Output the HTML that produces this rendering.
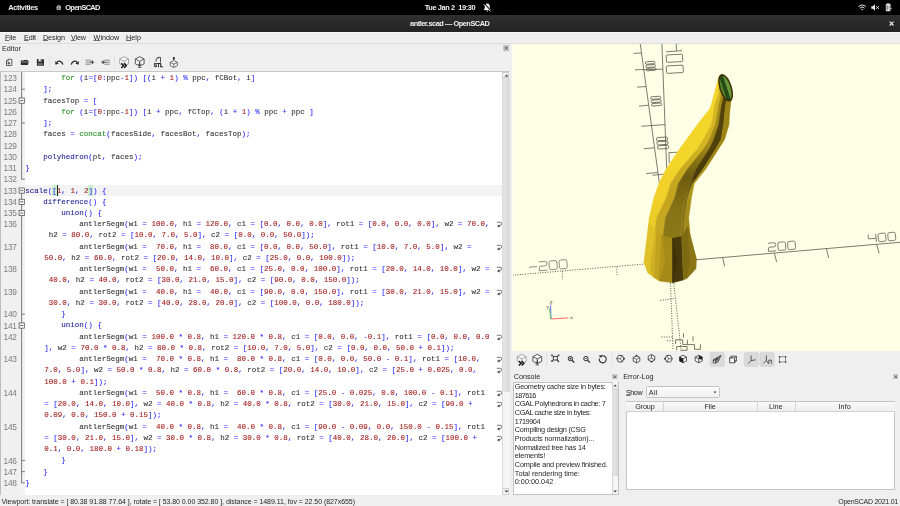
<!DOCTYPE html>
<html><head><meta charset="utf-8"><title>antler.scad — OpenSCAD</title>
<style>
html,body{margin:0;padding:0}
body{width:900px;height:506px;overflow:hidden;position:relative;background:#efefef;font-family:"Liberation Sans",sans-serif;color:#1a1a1a}
div,svg,span{box-sizing:border-box}
.abs{position:absolute}
#all{position:absolute;left:0;top:0;width:900px;height:506px;will-change:transform}
.t{position:absolute;white-space:pre;line-height:1}
#topbar{position:absolute;left:0;top:0;width:900px;height:14.5px;background:#000}
#titlebar{position:absolute;left:0;top:14.5px;width:900px;height:17px;background:linear-gradient(#303030,#282828 60%,#252525)}
#titleline{position:absolute;left:0;top:31.5px;width:900px;height:1px;background:#f8f8f8}
#editor{position:absolute;left:0;top:71px;width:509.8px;height:423.6px;background:#fff;overflow:hidden}
#edwrap{position:absolute;left:0;top:-71px;width:510px;height:506px}
.lnbg{position:absolute;left:0;top:71px;width:24.7px;height:424px;background:#f0f0f0;border-left:0.8px solid #bdbdbd}
.fmbg{position:absolute;left:20.2px;top:71px;width:4.4px;height:424px;background:#f3f3f3}
.edtop{position:absolute;left:0;top:71px;width:510px;height:0.9px;background:#c8c8c8}
.cur{position:absolute;left:24.5px;width:478px;height:11.25px;background:#f3f3f3}
.ln{position:absolute;left:0;width:16.5px;height:11.25px;line-height:11.25px;font-size:8.3px;letter-spacing:-0.32px;color:#7c7c7c;text-align:right;white-space:pre}
.row{position:absolute;height:11.25px;line-height:11.25px;font-family:"Liberation Mono",monospace;font-size:7.507px;color:#303030;white-space:pre;-webkit-text-stroke:0.08px currentColor}
.k{color:#1f8a1f} .tr{color:#1a1a90} .n{color:#a01818} .o{color:#2a2aff}
.wrap{position:absolute;left:496.0px}
</style></head>
<body><div id="all">

<div id="topbar"></div>
<div id="titlebar"></div><div id="titleline"></div>
<div class="t" style="left:8.20px;top:3.60px;font-size:7.4px;font-weight:bold;color:#f2f2f2;letter-spacing:-0.323px;">Activities</div>
<svg class="abs" style="left:55.7px;top:4.8px" width="5.6" height="5.6" viewBox="0 0 6 6"><circle cx="3" cy="3" r="2.6" fill="#cfcfcf"/><path d="M1 2.2H5M1 3.8H5M3 0.6V5.4" stroke="#555" stroke-width="0.7"/></svg>
<div class="t" style="left:65.30px;top:3.60px;font-size:7.4px;font-weight:bold;color:#f2f2f2;letter-spacing:-0.697px;">OpenSCAD</div>
<div class="t" style="left:424.70px;top:3.60px;font-size:7.4px;font-weight:bold;color:#f2f2f2;letter-spacing:-0.375px;">Tue Jan 2  19:30</div>
<svg class="abs" style="left:483.3px;top:3px" width="8.6" height="9.2" viewBox="0 0 8.6 9.2"><path d="M4.3 0.5C2.5 0.5 1.8 1.9 1.8 3.4V5.2L0.8 6.5V7H7.8V6.5L6.8 5.2V3.4C6.8 1.9 6.1 0.5 4.3 0.5ZM3.3 7.5A1 1 0 0 0 5.3 7.5Z" fill="#f4f4f4"/><path d="M1.4 0.7L8 7.9" stroke="#000" stroke-width="1.1"/><path d="M0.7 1.2L7.4 8.4" stroke="#f0f0f0" stroke-width="0.9"/></svg>
<svg class="abs" style="left:858px;top:3.8px" width="8.4" height="7" viewBox="0 0 8.4 7"><path d="M0.5 2.6A5.2 5.2 0 0 1 7.9 2.6" fill="none" stroke="#e8e8e8" stroke-width="1"/><path d="M1.9 4.1A3.3 3.3 0 0 1 6.5 4.1" fill="none" stroke="#e8e8e8" stroke-width="1"/><path d="M3.1 5.4A1.6 1.6 0 0 1 5.3 5.4L4.2 6.6Z" fill="#e8e8e8"/></svg>
<svg class="abs" style="left:870.8px;top:4.2px" width="8.6" height="7" viewBox="0 0 8.6 7"><path d="M0.3 2.3H1.8L4 0.2V6.8L1.8 4.7H0.3Z" fill="#e8e8e8"/><path d="M5.3 2.2L7.9 4.8M7.9 2.2L5.3 4.8" stroke="#e8e8e8" stroke-width="1"/></svg>
<svg class="abs" style="left:884.6px;top:3.2px" width="8" height="8.6" viewBox="0 0 8 8.6"><path d="M2 0.3H4.4V1H5.6V8.2H0.8V1H2Z" fill="#d8d8d8"/><path d="M2.2 2.6V6.8" stroke="#444" stroke-width="0.8"/><path d="M3.8 3.6L7.4 5.6L5.6 6L6 8L3.8 3.6Z" fill="#e8e8e8" stroke="#000" stroke-width="0.3"/></svg>
<div class="t" style="left:410.00px;top:19.90px;font-size:7.4px;font-weight:bold;color:#f0f0f0;letter-spacing:-0.479px;">antler.scad — OpenSCAD</div>
<svg class="abs" style="left:889px;top:21px" width="5.4" height="5.4" viewBox="0 0 5.4 5.4"><path d="M0.7 0.7L4.5 4.5M4.5 0.7L0.7 4.5" stroke="#f0f0f0" stroke-width="1.15"/></svg>


<div class="abs" style="left:0;top:43px;width:900px;height:0.8px;background:#dcdcdc"></div>
<div class="t" style="left:5.00px;top:34.20px;font-size:7.2px;color:#262626;letter-spacing:-0.134px;"><span style="text-decoration:underline;text-decoration-color:#707070;text-decoration-thickness:0.55px;text-underline-offset:0.2px">F</span>ile</div>
<div class="t" style="left:24.00px;top:34.20px;font-size:7.2px;color:#262626;letter-spacing:-0.136px;"><span style="text-decoration:underline;text-decoration-color:#707070;text-decoration-thickness:0.55px;text-underline-offset:0.2px">E</span>dit</div>
<div class="t" style="left:43.00px;top:34.20px;font-size:7.2px;color:#262626;letter-spacing:-0.082px;"><span style="text-decoration:underline;text-decoration-color:#707070;text-decoration-thickness:0.55px;text-underline-offset:0.2px">D</span>esign</div>
<div class="t" style="left:71.00px;top:34.20px;font-size:7.2px;color:#262626;letter-spacing:-0.159px;"><span style="text-decoration:underline;text-decoration-color:#707070;text-decoration-thickness:0.55px;text-underline-offset:0.2px">V</span>iew</div>
<div class="t" style="left:93.60px;top:34.20px;font-size:7.2px;color:#262626;letter-spacing:-0.002px;"><span style="text-decoration:underline;text-decoration-color:#707070;text-decoration-thickness:0.55px;text-underline-offset:0.2px">W</span>indow</div>
<div class="t" style="left:126.00px;top:34.20px;font-size:7.2px;color:#262626;letter-spacing:0.064px;"><span style="text-decoration:underline;text-decoration-color:#707070;text-decoration-thickness:0.55px;text-underline-offset:0.2px">H</span>elp</div>
<div class="t" style="left:2.00px;top:45.20px;font-size:7.2px;font-weight:normal;color:#262626;letter-spacing:0.038px;">Editor</div>
<svg class="abs" style="left:502.8px;top:45.4px" width="6.6" height="6.2" viewBox="0 0 6.6 6.2"><rect x="0.3" y="0.3" width="6" height="5.6" rx="1.2" fill="#c9c9c9" stroke="#b5b5b5" stroke-width="0.5"/><path d="M1.8 1.6L4.8 4.6M4.8 1.6L1.8 4.6" stroke="#3a3a3a" stroke-width="0.8"/></svg>

<svg class="abs" style="left:0;top:0" width="900" height="506" viewBox="0 0 900 506">
<g transform="translate(6.1 58.9) scale(1)"><path d="M2 0.4H5.7V6.6H0.4V2Z" fill="#fafafa" stroke="#2e2e2e" stroke-width="0.75"/><path d="M0.4 2H2V0.4" fill="none" stroke="#2e2e2e" stroke-width="0.6"/><path d="M1.2 4.2H4.2M2.7 2.7V5.7" stroke="#2e2e2e" stroke-width="0.9"/></g><g transform="translate(20.6 59.7) scale(1)"><path d="M0.2 0.9H2.6L3.3 0.2H7.2V1.3H8.2L7.3 5.4H0.2Z" fill="#2e2e2e"/><path d="M0.9 2.2H7.6" stroke="#efefef" stroke-width="0.5"/></g><g transform="translate(36.7 58.9) scale(1)"><path d="M0.2 0.2H6.4L7.3 1.1V6.8H0.2Z" fill="#2e2e2e"/><rect x="1.8" y="0.2" width="3.4" height="2.3" fill="#efefef"/><rect x="3.9" y="0.5" width="0.9" height="1.6" fill="#2e2e2e"/><rect x="1.3" y="4.6" width="4.9" height="1.1" fill="#9a9a9a"/></g><path d="M49.4 56.5V68" stroke="#dcdcdc" stroke-width="0.7"/>
<g transform="translate(55 59.8) scale(1)"><path d="M1.6 3.2C2.6 0.6 6.6 0.4 7.9 4.8" fill="none" stroke="#2e2e2e" stroke-width="1.15"/><path d="M0.1 1.4L0.5 5L3.9 3.8Z" fill="#2e2e2e"/></g><g transform="translate(70.1 59.8) scale(1)"><path d="M7.4 3.2C6.4 0.6 2.4 0.4 1.1 4.8" fill="none" stroke="#2e2e2e" stroke-width="1.15"/><path d="M8.9 1.4L8.5 5L5.1 3.8Z" fill="#2e2e2e"/></g><g transform="translate(85.6 59.6) scale(1)"><path d="M0 0.6H5.6M0 2.6H5.6M0 4.6H5.6" stroke="#808080" stroke-width="0.9"/><path d="M4.6 2.6H8.6M6.8 0.8V4.4" stroke="#3a3a3a" stroke-width="0.95"/></g><g transform="translate(101.3 59.6) scale(1)"><path d="M3 0.6H8.6M3 2.6H8.6M3 4.6H8.6" stroke="#808080" stroke-width="0.9"/><path d="M0 2.6H4M1.8 0.8V4.4" stroke="#3a3a3a" stroke-width="0.95"/></g><path d="M114.4 56.5V68" stroke="#dcdcdc" stroke-width="0.7"/>
<g transform="translate(119.4 56.4) scale(1)"><path d="M4.7 0.3L9.1 2.6V7.4L4.7 9.7L0.3 7.4V2.6Z" fill="#f6f6f6" stroke="#8e8e8e" stroke-width="0.75"/><path d="M0.3 2.6L4.7 4.9L9.1 2.6M4.7 4.9V9.7" fill="none" stroke="#8e8e8e" stroke-width="0.75"/><path d="M1.9 6.9L4.1 9.2L1.9 11.5M4.7 6.9L6.9 9.2L4.7 11.5" fill="none" stroke="#161616" stroke-width="1.45"/></g><g transform="translate(135 56.4) scale(1)"><path d="M4.7 0.3L9.1 2.6V7.4L4.7 9.7L0.3 7.4V2.6Z" fill="#f6f6f6" stroke="#3e3e3e" stroke-width="0.85"/><path d="M0.3 2.6L4.7 4.9L9.1 2.6M4.7 4.9V9.7" fill="none" stroke="#3e3e3e" stroke-width="0.85"/><path d="M4.7 5.8V9M3.4 7.8L4.7 9.3L6 7.8M3 10.9H6.4" fill="none" stroke="#333" stroke-width="0.85"/></g><path d="M149.8 56.5V68" stroke="#dcdcdc" stroke-width="0.7"/><g transform="translate(153.9 56.7) scale(1)"><path d="M2.2 5V3.2C2.2 1.4 3.6 0.6 5.2 0.6H6.6V5.8" fill="none" stroke="#4a4a4a" stroke-width="0.95"/><path d="M3.2 1.2L4.8 0.2V2.2Z" fill="#4a4a4a"/><text x="-0.2" y="10.2" font-family="Liberation Sans" font-weight="bold" font-size="4.9" fill="#111" stroke="#111" stroke-width="0.25" textLength="9.4" lengthAdjust="spacingAndGlyphs">STL</text></g><g transform="translate(169.8 57) scale(1)"><path d="M4 0V2.8" stroke="#222" stroke-width="1.7"/><path d="M4 3.6L7.6 5.3V8.7L4 10.5L0.4 8.7V5.3Z" fill="#f6f6f6" stroke="#505050" stroke-width="0.8"/><path d="M0.4 5.3L4 7.1L7.6 5.3M4 7.1V10.5" fill="none" stroke="#505050" stroke-width="0.8"/></g>
</svg>
<div id="editor"><div id="edwrap">
<div class="lnbg"></div><div class="fmbg"></div><div class="edtop"></div>
<div class="ln" style="top:73.18px">123</div>
<div class="row" style="top:73.03px;left:25.30px">        <span class="k">for</span> <span class="o">(</span>i<span class="o">=</span><span class="o">[</span><span class="n">0</span><span class="o">:</span>ppc<span class="o">-</span><span class="n">1</span><span class="o">]</span><span class="o">)</span> <span class="o">[</span><span class="o">(</span>i <span class="o">+</span> <span class="n">1</span><span class="o">)</span> <span class="o">%</span> ppc<span class="o">,</span> fCBot<span class="o">,</span> i<span class="o">]</span></div>
<div class="ln" style="top:84.42px">124</div>
<div class="row" style="top:84.27px;left:25.30px">    <span class="o">]</span><span class="o">;</span></div>
<div class="ln" style="top:95.67px">125</div>
<div class="row" style="top:95.52px;left:25.30px">    facesTop <span class="o">=</span> <span class="o">[</span></div>
<div class="ln" style="top:106.92px">126</div>
<div class="row" style="top:106.77px;left:25.30px">        <span class="k">for</span> <span class="o">(</span>i<span class="o">=</span><span class="o">[</span><span class="n">0</span><span class="o">:</span>ppc<span class="o">-</span><span class="n">1</span><span class="o">]</span><span class="o">)</span> <span class="o">[</span>i <span class="o">+</span> ppc<span class="o">,</span> fCTop<span class="o">,</span> <span class="o">(</span>i <span class="o">+</span> <span class="n">1</span><span class="o">)</span> <span class="o">%</span> ppc <span class="o">+</span> ppc <span class="o">]</span></div>
<div class="ln" style="top:118.16px">127</div>
<div class="row" style="top:118.01px;left:25.30px">    <span class="o">]</span><span class="o">;</span></div>
<div class="ln" style="top:129.41px">128</div>
<div class="row" style="top:129.26px;left:25.30px">    faces <span class="o">=</span> <span class="k">concat</span><span class="o">(</span>facesSide<span class="o">,</span> facesBot<span class="o">,</span> facesTop<span class="o">)</span><span class="o">;</span></div>
<div class="ln" style="top:140.66px">129</div>
<div class="ln" style="top:151.91px">130</div>
<div class="row" style="top:151.76px;left:25.30px">    <span class="tr">polyhedron</span><span class="o">(</span>pt<span class="o">,</span> faces<span class="o">)</span><span class="o">;</span></div>
<div class="ln" style="top:163.15px">131</div>
<div class="row" style="top:163.00px;left:25.30px"><span class="o">}</span></div>
<div class="ln" style="top:174.40px">132</div>
<div class="cur" style="top:184.85px"></div>
<div class="abs" style="left:52.33px;top:185.25px;width:4.50px;height:10.45px;background:#ccf0cc"></div>
<div class="abs" style="left:88.37px;top:185.25px;width:4.50px;height:10.45px;background:#ccf0cc"></div>
<div class="abs" style="left:56.54px;top:185.15px;width:0.9px;height:10.65px;background:#222"></div>
<div class="ln" style="top:185.65px">133</div>
<div class="row" style="top:185.50px;left:25.30px"><span class="tr">scale</span><span class="o">(</span><span class="o">[</span><span class="n">1</span><span class="o">,</span> <span class="n">1</span><span class="o">,</span> <span class="n">2</span><span class="o">]</span><span class="o">)</span> <span class="o">{</span></div>
<div class="ln" style="top:196.89px">134</div>
<div class="row" style="top:196.74px;left:25.30px">    <span class="tr">difference</span><span class="o">(</span><span class="o">)</span> <span class="o">{</span></div>
<div class="ln" style="top:208.14px">135</div>
<div class="row" style="top:207.99px;left:25.30px">        <span class="tr">union</span><span class="o">(</span><span class="o">)</span> <span class="o">{</span></div>
<div class="ln" style="top:219.39px">136</div>
<div class="row" style="top:219.24px;left:25.30px">            antlerSegm<span class="o">(</span>w1 <span class="o">=</span> <span class="n">100.0</span><span class="o">,</span> h1 <span class="o">=</span> <span class="n">120.0</span><span class="o">,</span> c1 <span class="o">=</span> <span class="o">[</span><span class="n">0.0</span><span class="o">,</span> <span class="n">0.0</span><span class="o">,</span> <span class="n">0.0</span><span class="o">]</span><span class="o">,</span> rot1 <span class="o">=</span> <span class="o">[</span><span class="n">0.0</span><span class="o">,</span> <span class="n">0.0</span><span class="o">,</span> <span class="n">0.0</span><span class="o">]</span><span class="o">,</span> w2 <span class="o">=</span> <span class="n">70.0</span><span class="o">,</span></div>
<svg class="wrap" style="top:221.11px" width="6" height="7" viewBox="0 0 6 7"><path d="M0.8 1.3H4.6Q5.5 1.3 5.5 2.2V3.3Q5.5 4.3 4.3 4.5L2.6 4.9" fill="none" stroke="#585858" stroke-width="0.8"/><path d="M0.9 5.3L3.4 3.2L3.8 6.4Z" fill="#505050"/></svg>
<div class="row" style="top:230.48px;left:44.32px"> h2 <span class="o">=</span> <span class="n">80.0</span><span class="o">,</span> rot2 <span class="o">=</span> <span class="o">[</span><span class="n">10.0</span><span class="o">,</span> <span class="n">7.0</span><span class="o">,</span> <span class="n">5.0</span><span class="o">]</span><span class="o">,</span> c2 <span class="o">=</span> <span class="o">[</span><span class="n">0.0</span><span class="o">,</span> <span class="n">0.0</span><span class="o">,</span> <span class="n">50.0</span><span class="o">]</span><span class="o">)</span><span class="o">;</span></div>
<div class="ln" style="top:241.88px">137</div>
<div class="row" style="top:241.73px;left:25.30px">            antlerSegm<span class="o">(</span>w1 <span class="o">=</span>  <span class="n">70.0</span><span class="o">,</span> h1 <span class="o">=</span>  <span class="n">80.0</span><span class="o">,</span> c1 <span class="o">=</span> <span class="o">[</span><span class="n">0.0</span><span class="o">,</span> <span class="n">0.0</span><span class="o">,</span> <span class="n">50.0</span><span class="o">]</span><span class="o">,</span> rot1 <span class="o">=</span> <span class="o">[</span><span class="n">10.0</span><span class="o">,</span> <span class="n">7.0</span><span class="o">,</span> <span class="n">5.0</span><span class="o">]</span><span class="o">,</span> w2 <span class="o">=</span> </div>
<svg class="wrap" style="top:243.60px" width="6" height="7" viewBox="0 0 6 7"><path d="M0.8 1.3H4.6Q5.5 1.3 5.5 2.2V3.3Q5.5 4.3 4.3 4.5L2.6 4.9" fill="none" stroke="#585858" stroke-width="0.8"/><path d="M0.9 5.3L3.4 3.2L3.8 6.4Z" fill="#505050"/></svg>
<div class="row" style="top:252.98px;left:44.32px"><span class="n">50.0</span><span class="o">,</span> h2 <span class="o">=</span> <span class="n">60.0</span><span class="o">,</span> rot2 <span class="o">=</span> <span class="o">[</span><span class="n">20.0</span><span class="o">,</span> <span class="n">14.0</span><span class="o">,</span> <span class="n">10.0</span><span class="o">]</span><span class="o">,</span> c2 <span class="o">=</span> <span class="o">[</span><span class="n">25.0</span><span class="o">,</span> <span class="n">0.0</span><span class="o">,</span> <span class="n">100.0</span><span class="o">]</span><span class="o">)</span><span class="o">;</span></div>
<div class="ln" style="top:264.38px">138</div>
<div class="row" style="top:264.23px;left:25.30px">            antlerSegm<span class="o">(</span>w1 <span class="o">=</span>  <span class="n">50.0</span><span class="o">,</span> h1 <span class="o">=</span>  <span class="n">60.0</span><span class="o">,</span> c1 <span class="o">=</span> <span class="o">[</span><span class="n">25.0</span><span class="o">,</span> <span class="n">0.0</span><span class="o">,</span> <span class="n">100.0</span><span class="o">]</span><span class="o">,</span> rot1 <span class="o">=</span> <span class="o">[</span><span class="n">20.0</span><span class="o">,</span> <span class="n">14.0</span><span class="o">,</span> <span class="n">10.0</span><span class="o">]</span><span class="o">,</span> w2 <span class="o">=</span></div>
<svg class="wrap" style="top:266.10px" width="6" height="7" viewBox="0 0 6 7"><path d="M0.8 1.3H4.6Q5.5 1.3 5.5 2.2V3.3Q5.5 4.3 4.3 4.5L2.6 4.9" fill="none" stroke="#585858" stroke-width="0.8"/><path d="M0.9 5.3L3.4 3.2L3.8 6.4Z" fill="#505050"/></svg>
<div class="row" style="top:275.47px;left:44.32px"> <span class="n">40.0</span><span class="o">,</span> h2 <span class="o">=</span> <span class="n">40.0</span><span class="o">,</span> rot2 <span class="o">=</span> <span class="o">[</span><span class="n">30.0</span><span class="o">,</span> <span class="n">21.0</span><span class="o">,</span> <span class="n">15.0</span><span class="o">]</span><span class="o">,</span> c2 <span class="o">=</span> <span class="o">[</span><span class="n">90.0</span><span class="o">,</span> <span class="n">0.0</span><span class="o">,</span> <span class="n">150.0</span><span class="o">]</span><span class="o">)</span><span class="o">;</span></div>
<div class="ln" style="top:286.87px">139</div>
<div class="row" style="top:286.72px;left:25.30px">            antlerSegm<span class="o">(</span>w1 <span class="o">=</span>  <span class="n">40.0</span><span class="o">,</span> h1 <span class="o">=</span>  <span class="n">40.0</span><span class="o">,</span> c1 <span class="o">=</span> <span class="o">[</span><span class="n">90.0</span><span class="o">,</span> <span class="n">0.0</span><span class="o">,</span> <span class="n">150.0</span><span class="o">]</span><span class="o">,</span> rot1 <span class="o">=</span> <span class="o">[</span><span class="n">30.0</span><span class="o">,</span> <span class="n">21.0</span><span class="o">,</span> <span class="n">15.0</span><span class="o">]</span><span class="o">,</span> w2 <span class="o">=</span></div>
<svg class="wrap" style="top:288.59px" width="6" height="7" viewBox="0 0 6 7"><path d="M0.8 1.3H4.6Q5.5 1.3 5.5 2.2V3.3Q5.5 4.3 4.3 4.5L2.6 4.9" fill="none" stroke="#585858" stroke-width="0.8"/><path d="M0.9 5.3L3.4 3.2L3.8 6.4Z" fill="#505050"/></svg>
<div class="row" style="top:297.97px;left:44.32px"> <span class="n">30.0</span><span class="o">,</span> h2 <span class="o">=</span> <span class="n">30.0</span><span class="o">,</span> rot2 <span class="o">=</span> <span class="o">[</span><span class="n">40.0</span><span class="o">,</span> <span class="n">28.0</span><span class="o">,</span> <span class="n">20.0</span><span class="o">]</span><span class="o">,</span> c2 <span class="o">=</span> <span class="o">[</span><span class="n">100.0</span><span class="o">,</span> <span class="n">0.0</span><span class="o">,</span> <span class="n">180.0</span><span class="o">]</span><span class="o">)</span><span class="o">;</span></div>
<div class="ln" style="top:309.36px">140</div>
<div class="row" style="top:309.21px;left:25.30px">        <span class="o">}</span></div>
<div class="ln" style="top:320.61px">141</div>
<div class="row" style="top:320.46px;left:25.30px">        <span class="tr">union</span><span class="o">(</span><span class="o">)</span> <span class="o">{</span></div>
<div class="ln" style="top:331.86px">142</div>
<div class="row" style="top:331.71px;left:25.30px">            antlerSegm<span class="o">(</span>w1 <span class="o">=</span> <span class="n">100.0</span> <span class="o">*</span> <span class="n">0.8</span><span class="o">,</span> h1 <span class="o">=</span> <span class="n">120.0</span> <span class="o">*</span> <span class="n">0.8</span><span class="o">,</span> c1 <span class="o">=</span> <span class="o">[</span><span class="n">0.0</span><span class="o">,</span> <span class="n">0.0</span><span class="o">,</span> <span class="o">-</span><span class="n">0.1</span><span class="o">]</span><span class="o">,</span> rot1 <span class="o">=</span> <span class="o">[</span><span class="n">0.0</span><span class="o">,</span> <span class="n">0.0</span><span class="o">,</span> <span class="n">0.0</span></div>
<svg class="wrap" style="top:333.58px" width="6" height="7" viewBox="0 0 6 7"><path d="M0.8 1.3H4.6Q5.5 1.3 5.5 2.2V3.3Q5.5 4.3 4.3 4.5L2.6 4.9" fill="none" stroke="#585858" stroke-width="0.8"/><path d="M0.9 5.3L3.4 3.2L3.8 6.4Z" fill="#505050"/></svg>
<div class="row" style="top:342.95px;left:44.32px"><span class="o">]</span><span class="o">,</span> w2 <span class="o">=</span> <span class="n">70.0</span> <span class="o">*</span> <span class="n">0.8</span><span class="o">,</span> h2 <span class="o">=</span> <span class="n">80.0</span> <span class="o">*</span> <span class="n">0.8</span><span class="o">,</span> rot2 <span class="o">=</span> <span class="o">[</span><span class="n">10.0</span><span class="o">,</span> <span class="n">7.0</span><span class="o">,</span> <span class="n">5.0</span><span class="o">]</span><span class="o">,</span> c2 <span class="o">=</span> <span class="o">[</span><span class="n">0.0</span><span class="o">,</span> <span class="n">0.0</span><span class="o">,</span> <span class="n">50.0</span> <span class="o">+</span> <span class="n">0.1</span><span class="o">]</span><span class="o">)</span><span class="o">;</span></div>
<div class="ln" style="top:354.35px">143</div>
<div class="row" style="top:354.20px;left:25.30px">            antlerSegm<span class="o">(</span>w1 <span class="o">=</span>  <span class="n">70.0</span> <span class="o">*</span> <span class="n">0.8</span><span class="o">,</span> h1 <span class="o">=</span>  <span class="n">80.0</span> <span class="o">*</span> <span class="n">0.8</span><span class="o">,</span> c1 <span class="o">=</span> <span class="o">[</span><span class="n">0.0</span><span class="o">,</span> <span class="n">0.0</span><span class="o">,</span> <span class="n">50.0</span> <span class="o">-</span> <span class="n">0.1</span><span class="o">]</span><span class="o">,</span> rot1 <span class="o">=</span> <span class="o">[</span><span class="n">10.0</span><span class="o">,</span> </div>
<svg class="wrap" style="top:356.07px" width="6" height="7" viewBox="0 0 6 7"><path d="M0.8 1.3H4.6Q5.5 1.3 5.5 2.2V3.3Q5.5 4.3 4.3 4.5L2.6 4.9" fill="none" stroke="#585858" stroke-width="0.8"/><path d="M0.9 5.3L3.4 3.2L3.8 6.4Z" fill="#505050"/></svg>
<div class="row" style="top:365.45px;left:44.32px"><span class="n">7.0</span><span class="o">,</span> <span class="n">5.0</span><span class="o">]</span><span class="o">,</span> w2 <span class="o">=</span> <span class="n">50.0</span> <span class="o">*</span> <span class="n">0.8</span><span class="o">,</span> h2 <span class="o">=</span> <span class="n">60.0</span> <span class="o">*</span> <span class="n">0.8</span><span class="o">,</span> rot2 <span class="o">=</span> <span class="o">[</span><span class="n">20.0</span><span class="o">,</span> <span class="n">14.0</span><span class="o">,</span> <span class="n">10.0</span><span class="o">]</span><span class="o">,</span> c2 <span class="o">=</span> <span class="o">[</span><span class="n">25.0</span> <span class="o">+</span> <span class="n">0.025</span><span class="o">,</span> <span class="n">0.0</span><span class="o">,</span> </div>
<svg class="wrap" style="top:367.32px" width="6" height="7" viewBox="0 0 6 7"><path d="M0.8 1.3H4.6Q5.5 1.3 5.5 2.2V3.3Q5.5 4.3 4.3 4.5L2.6 4.9" fill="none" stroke="#585858" stroke-width="0.8"/><path d="M0.9 5.3L3.4 3.2L3.8 6.4Z" fill="#505050"/></svg>
<div class="row" style="top:376.70px;left:44.32px"><span class="n">100.0</span> <span class="o">+</span> <span class="n">0.1</span><span class="o">]</span><span class="o">)</span><span class="o">;</span></div>
<div class="ln" style="top:388.09px">144</div>
<div class="row" style="top:387.94px;left:25.30px">            antlerSegm<span class="o">(</span>w1 <span class="o">=</span>  <span class="n">50.0</span> <span class="o">*</span> <span class="n">0.8</span><span class="o">,</span> h1 <span class="o">=</span>  <span class="n">60.0</span> <span class="o">*</span> <span class="n">0.8</span><span class="o">,</span> c1 <span class="o">=</span> <span class="o">[</span><span class="n">25.0</span> <span class="o">-</span> <span class="n">0.025</span><span class="o">,</span> <span class="n">0.0</span><span class="o">,</span> <span class="n">100.0</span> <span class="o">-</span> <span class="n">0.1</span><span class="o">]</span><span class="o">,</span> rot1</div>
<svg class="wrap" style="top:389.82px" width="6" height="7" viewBox="0 0 6 7"><path d="M0.8 1.3H4.6Q5.5 1.3 5.5 2.2V3.3Q5.5 4.3 4.3 4.5L2.6 4.9" fill="none" stroke="#585858" stroke-width="0.8"/><path d="M0.9 5.3L3.4 3.2L3.8 6.4Z" fill="#505050"/></svg>
<div class="row" style="top:399.19px;left:44.32px"><span class="o">=</span> <span class="o">[</span><span class="n">20.0</span><span class="o">,</span> <span class="n">14.0</span><span class="o">,</span> <span class="n">10.0</span><span class="o">]</span><span class="o">,</span> w2 <span class="o">=</span> <span class="n">40.0</span> <span class="o">*</span> <span class="n">0.8</span><span class="o">,</span> h2 <span class="o">=</span> <span class="n">40.0</span> <span class="o">*</span> <span class="n">0.8</span><span class="o">,</span> rot2 <span class="o">=</span> <span class="o">[</span><span class="n">30.0</span><span class="o">,</span> <span class="n">21.0</span><span class="o">,</span> <span class="n">15.0</span><span class="o">]</span><span class="o">,</span> c2 <span class="o">=</span> <span class="o">[</span><span class="n">90.0</span> <span class="o">+</span> </div>
<svg class="wrap" style="top:401.06px" width="6" height="7" viewBox="0 0 6 7"><path d="M0.8 1.3H4.6Q5.5 1.3 5.5 2.2V3.3Q5.5 4.3 4.3 4.5L2.6 4.9" fill="none" stroke="#585858" stroke-width="0.8"/><path d="M0.9 5.3L3.4 3.2L3.8 6.4Z" fill="#505050"/></svg>
<div class="row" style="top:410.44px;left:44.32px"><span class="n">0.09</span><span class="o">,</span> <span class="n">0.0</span><span class="o">,</span> <span class="n">150.0</span> <span class="o">+</span> <span class="n">0.15</span><span class="o">]</span><span class="o">)</span><span class="o">;</span></div>
<div class="ln" style="top:421.83px">145</div>
<div class="row" style="top:421.68px;left:25.30px">            antlerSegm<span class="o">(</span>w1 <span class="o">=</span>  <span class="n">40.0</span> <span class="o">*</span> <span class="n">0.8</span><span class="o">,</span> h1 <span class="o">=</span>  <span class="n">40.0</span> <span class="o">*</span> <span class="n">0.8</span><span class="o">,</span> c1 <span class="o">=</span> <span class="o">[</span><span class="n">90.0</span> <span class="o">-</span> <span class="n">0.09</span><span class="o">,</span> <span class="n">0.0</span><span class="o">,</span> <span class="n">150.0</span> <span class="o">-</span> <span class="n">0.15</span><span class="o">]</span><span class="o">,</span> rot1</div>
<svg class="wrap" style="top:423.56px" width="6" height="7" viewBox="0 0 6 7"><path d="M0.8 1.3H4.6Q5.5 1.3 5.5 2.2V3.3Q5.5 4.3 4.3 4.5L2.6 4.9" fill="none" stroke="#585858" stroke-width="0.8"/><path d="M0.9 5.3L3.4 3.2L3.8 6.4Z" fill="#505050"/></svg>
<div class="row" style="top:432.93px;left:44.32px"><span class="o">=</span> <span class="o">[</span><span class="n">30.0</span><span class="o">,</span> <span class="n">21.0</span><span class="o">,</span> <span class="n">15.0</span><span class="o">]</span><span class="o">,</span> w2 <span class="o">=</span> <span class="n">30.0</span> <span class="o">*</span> <span class="n">0.8</span><span class="o">,</span> h2 <span class="o">=</span> <span class="n">30.0</span> <span class="o">*</span> <span class="n">0.8</span><span class="o">,</span> rot2 <span class="o">=</span> <span class="o">[</span><span class="n">40.0</span><span class="o">,</span> <span class="n">28.0</span><span class="o">,</span> <span class="n">20.0</span><span class="o">]</span><span class="o">,</span> c2 <span class="o">=</span> <span class="o">[</span><span class="n">100.0</span> <span class="o">+</span> </div>
<svg class="wrap" style="top:434.80px" width="6" height="7" viewBox="0 0 6 7"><path d="M0.8 1.3H4.6Q5.5 1.3 5.5 2.2V3.3Q5.5 4.3 4.3 4.5L2.6 4.9" fill="none" stroke="#585858" stroke-width="0.8"/><path d="M0.9 5.3L3.4 3.2L3.8 6.4Z" fill="#505050"/></svg>
<div class="row" style="top:444.18px;left:44.32px"><span class="n">0.1</span><span class="o">,</span> <span class="n">0.0</span><span class="o">,</span> <span class="n">180.0</span> <span class="o">+</span> <span class="n">0.18</span><span class="o">]</span><span class="o">)</span><span class="o">;</span></div>
<div class="ln" style="top:455.57px">146</div>
<div class="row" style="top:455.42px;left:25.30px">        <span class="o">}</span></div>
<div class="ln" style="top:466.82px">147</div>
<div class="row" style="top:466.67px;left:25.30px">    <span class="o">}</span></div>
<div class="ln" style="top:478.07px">148</div>
<div class="row" style="top:477.92px;left:25.30px"><span class="o">}</span></div>
<svg class="abs" style="left:0;top:0" width="30" height="506" viewBox="0 0 30 506"><path d="M21.6 72.0V179.223" stroke="#5c5c5c" stroke-width="0.8" fill="none"/>
<path d="M21.6 190.47V482.892" stroke="#5c5c5c" stroke-width="0.8" fill="none"/>
<path d="M21.6 89.247H24.900000000000002" stroke="#5c5c5c" stroke-width="0.8"/>
<path d="M21.6 460.398H24.900000000000002" stroke="#5c5c5c" stroke-width="0.8"/>
<path d="M21.6 471.645H24.900000000000002" stroke="#5c5c5c" stroke-width="0.8"/>
<path d="M21.6 314.187H24.900000000000002" stroke="#5c5c5c" stroke-width="0.8"/>
<path d="M21.6 122.988H24.900000000000002" stroke="#5c5c5c" stroke-width="0.8"/>
<path d="M21.6 482.892H24.900000000000002" stroke="#5c5c5c" stroke-width="0.8"/>
<path d="M21.6 179.223H24.900000000000002" stroke="#5c5c5c" stroke-width="0.8"/>
<rect x="19.10" y="97.99" width="5.2" height="5.2" fill="#fff" stroke="#4a4a4a" stroke-width="0.75"/>
<path d="M20.20 100.59H23.20" stroke="#333" stroke-width="0.75"/>
<rect x="19.10" y="187.97" width="5.2" height="5.2" fill="#fff" stroke="#4a4a4a" stroke-width="0.75"/>
<path d="M20.20 190.57H23.20" stroke="#333" stroke-width="0.75"/>
<rect x="19.10" y="199.22" width="5.2" height="5.2" fill="#fff" stroke="#4a4a4a" stroke-width="0.75"/>
<path d="M20.20 201.82H23.20" stroke="#333" stroke-width="0.75"/>
<rect x="19.10" y="210.46" width="5.2" height="5.2" fill="#fff" stroke="#4a4a4a" stroke-width="0.75"/>
<path d="M20.20 213.06H23.20" stroke="#333" stroke-width="0.75"/>
<rect x="19.10" y="322.93" width="5.2" height="5.2" fill="#fff" stroke="#4a4a4a" stroke-width="0.75"/>
<path d="M20.20 325.53H23.20" stroke="#333" stroke-width="0.75"/></svg>

<div class="abs" style="left:502px;top:72px;width:7.8px;height:423px;background:#f5f5f5;border-left:1px solid #dcdcdc"></div>
<div class="abs" style="left:502.3px;top:78.2px;width:7.5px;height:314px;background:linear-gradient(90deg,#d9d9d9,#e5e5e5 25%,#d8d8d8)"></div>
<div class="abs" style="left:502.4px;top:72px;width:7.1px;height:6.2px;background:#f4f4f4;border:0.6px solid #cfcfcf"></div>
<div class="abs" style="left:502.4px;top:488px;width:7.1px;height:6.5px;background:#f4f4f4;border:0.6px solid #cfcfcf"></div>
<svg class="abs" style="left:503.6px;top:73.8px" width="5" height="3" viewBox="0 0 5 3"><path d="M0.4 2.4L2.5 0.5L4.6 2.4Z" fill="#444"/></svg>
<svg class="abs" style="left:503.6px;top:490px" width="5" height="3" viewBox="0 0 5 3"><path d="M0.4 0.6L2.5 2.5L4.6 0.6Z" fill="#444"/></svg>

</div></div>

<div class="abs" style="left:512.3px;top:43.5px;width:387.7px;height:307px;background:#ffffe6;overflow:hidden">
<svg class="abs" style="left:-512.3px;top:-43.5px" width="900" height="506" viewBox="0 0 900 506">
<g fill="none" stroke="#5a5a50" stroke-width="0.8">
<path d="M640.2 43.5L659.8 186"/><path d="M661.9 43.5L666.7 169"/>
<path d="M633.4 53.4L641.4 53.0"/>
<path d="M635 69.8L662.8 69.2"/>
<path d="M637.1 87.1L646.1 86.6"/>
<path d="M639 106.1L648.6 105.2"/>
<path d="M641.3 126.3L665.1 124.6"/>
<path d="M643.7 148.7L654 147.9"/>
<path d="M646.1 173.6L657.9 172.5"/>
<path d="M652.4 175.2L665.1 174.1"/>
<path d="M678.7 152.2L669 152.6L669.2 163"/>
<path d="M676.3 43.5V51.2M666.2 51.8L682 50.6M676.3 43.6H681"/>
<rect x="666.3" y="54.6" width="16.3" height="7.4" rx="1" transform="rotate(-3 674 58)"/>
<rect x="666.4" y="65.6" width="16.8" height="7.4" rx="1" transform="rotate(-3 674 69)"/>
<rect x="645.60" y="61.50" width="9.60" height="2.43" rx="1.1" transform="rotate(-4 650.4 66.2)"/>
<rect x="645.85" y="64.83" width="9.60" height="2.43" rx="1.1" transform="rotate(-4 650.4 66.2)"/>
<rect x="646.10" y="68.17" width="9.60" height="2.43" rx="1.1" transform="rotate(-4 650.4 66.2)"/>
<rect x="650.90" y="96.50" width="10.00" height="2.50" rx="1.1" transform="rotate(-4 655.9 101.3)"/>
<rect x="651.15" y="99.90" width="10.00" height="2.50" rx="1.1" transform="rotate(-4 655.9 101.3)"/>
<rect x="651.40" y="103.30" width="10.00" height="2.50" rx="1.1" transform="rotate(-4 655.9 101.3)"/>
<rect x="656.80" y="137.30" width="11.00" height="3.23" rx="1.1" transform="rotate(-4 662.3 143.2)"/>
<rect x="657.05" y="141.43" width="11.00" height="3.23" rx="1.1" transform="rotate(-4 662.3 143.2)"/>
<rect x="657.30" y="145.57" width="11.00" height="3.23" rx="1.1" transform="rotate(-4 662.3 143.2)"/>
<path d="M695.6 259.8L900 242.3"/>
<path d="M722.6 257.4L724.6 266.4"/>
<path d="M774.4 253.0L776.6 262.0"/>
<path d="M826.4 248.6L828.7 258.0"/>
<path d="M876.6 244.3L879.2 253.4"/>
</g>
<g fill="none" stroke="#55554c" stroke-width="0.9" stroke-dasharray="1.1 1.4">
<path d="M512.5 275.2L643.6 264.1"/><path d="M562.4 271.2V279.4"/><path d="M616.9 266.6V275"/>
<path d="M670.5 283L673 350.5"/><path d="M673.7 283L681.2 350.5"/>
<path d="M660.2 300.4L674.2 298.6"/><path d="M661.3 337H672.6"/><path d="M666.9 340.7H672.6"/>
</g>
<g transform="rotate(-4.9 768.6 251.39999999999998)" fill="none" stroke="#66665c" stroke-width="0.8"><path d="M768.60 243.20H774.53Q776.20 243.20 776.20 244.87V245.63Q776.20 247.30 774.53 247.30H770.27Q768.60 247.30 768.60 248.97V251.40H776.20"/><rect x="778.40" y="243.20" width="7.60" height="8.20" rx="1.67"/><rect x="788.20" y="243.20" width="7.60" height="8.20" rx="1.67"/></g>
<g transform="rotate(-4.9 868.8 242.6)" fill="none" stroke="#66665c" stroke-width="0.8"><path d="M868.80 234.40V238.91H876.40M876.40 234.40V242.60"/><rect x="878.60" y="234.40" width="7.60" height="8.20" rx="1.67"/><rect x="888.40" y="234.40" width="7.60" height="8.20" rx="1.67"/></g>
<g transform="rotate(-4.9 529.4 271.6)" fill="none" stroke="#77776c" stroke-width="0.8"><path d="M529.40 267.20H537.30"/><path d="M539.50 262.80H545.66Q547.40 262.80 547.40 264.54V265.46Q547.40 267.20 545.66 267.20H541.24Q539.50 267.20 539.50 268.94V271.60H547.40"/><rect x="549.60" y="262.80" width="7.90" height="8.80" rx="1.74"/><rect x="559.70" y="262.80" width="7.90" height="8.80" rx="1.74"/></g>
<g fill="none" stroke="#55554c" stroke-width="0.8">
<path d="M675.6 344.1L675.6 339.8L682.7 339.8L682.7 344.6L687.4 344.6L687.4 339.8"/>
<path d="M683.5 333.2L683.5 337.6"/><path d="M693.0 336.3L693.0 341.4"/>
<path d="M676.7 350.3L676.7 346.5L687.1 346.5L687.1 350.3L680.3 350.3"/>
<path d="M687.4 344.6L694.5 344.6L694.5 349.3L700.4 349.3L700.4 344.2"/>
</g>
<defs><linearGradient id="bg0" gradientUnits="userSpaceOnUse" x1="0" y1="78.0" x2="0" y2="240.0"><stop offset="0.0525" stop-color="#f4d62a"/><stop offset="0.1355" stop-color="#f4d62a"/><stop offset="0.1802" stop-color="#f4d62a"/><stop offset="0.2108" stop-color="#f4d62a"/><stop offset="0.2574" stop-color="#f4d62a"/><stop offset="0.3336" stop-color="#f4d62a"/><stop offset="0.4083" stop-color="#f4d62a"/><stop offset="0.5012" stop-color="#f4d62a"/><stop offset="0.6080" stop-color="#f2d229"/><stop offset="0.6932" stop-color="#f1d029"/><stop offset="0.7994" stop-color="#eece28"/><stop offset="0.9315" stop-color="#eccc28"/></linearGradient><linearGradient id="bg1" gradientUnits="userSpaceOnUse" x1="0" y1="78.0" x2="0" y2="240.0"><stop offset="0.0525" stop-color="#d6b620"/><stop offset="0.1355" stop-color="#d6b620"/><stop offset="0.1802" stop-color="#d6b620"/><stop offset="0.2108" stop-color="#d6b620"/><stop offset="0.2574" stop-color="#d6b620"/><stop offset="0.3336" stop-color="#d6b620"/><stop offset="0.4083" stop-color="#d6b620"/><stop offset="0.5012" stop-color="#cdae1f"/><stop offset="0.6080" stop-color="#c8a81e"/><stop offset="0.6932" stop-color="#c4a41d"/><stop offset="0.7994" stop-color="#c6a61f"/><stop offset="0.9315" stop-color="#c8a820"/></linearGradient><linearGradient id="bg2" gradientUnits="userSpaceOnUse" x1="0" y1="78.0" x2="0" y2="240.0"><stop offset="0.0525" stop-color="#a68c16"/><stop offset="0.1355" stop-color="#a68c16"/><stop offset="0.1802" stop-color="#a68c16"/><stop offset="0.2108" stop-color="#a68c16"/><stop offset="0.2574" stop-color="#a68c16"/><stop offset="0.3336" stop-color="#a68c16"/><stop offset="0.4083" stop-color="#a68c16"/><stop offset="0.5012" stop-color="#8a7614"/><stop offset="0.6080" stop-color="#6e5c10"/><stop offset="0.6932" stop-color="#786512"/><stop offset="0.7994" stop-color="#847215"/><stop offset="0.9315" stop-color="#8a7818"/></linearGradient><linearGradient id="bg3" gradientUnits="userSpaceOnUse" x1="0" y1="78.0" x2="0" y2="240.0"><stop offset="0.0525" stop-color="#51420b"/><stop offset="0.1355" stop-color="#51420b"/><stop offset="0.1802" stop-color="#51420b"/><stop offset="0.2108" stop-color="#51420b"/><stop offset="0.2574" stop-color="#51420b"/><stop offset="0.3336" stop-color="#51420b"/><stop offset="0.4083" stop-color="#51420b"/><stop offset="0.5012" stop-color="#4c3d0a"/><stop offset="0.6080" stop-color="#4a3c0a"/><stop offset="0.6932" stop-color="#786512"/><stop offset="0.7994" stop-color="#847215"/><stop offset="0.9315" stop-color="#8a7818"/></linearGradient><linearGradient id="bg4" gradientUnits="userSpaceOnUse" x1="0" y1="78.0" x2="0" y2="240.0"><stop offset="0.0525" stop-color="#9c8414"/><stop offset="0.1355" stop-color="#9c8414"/><stop offset="0.1802" stop-color="#9c8414"/><stop offset="0.2108" stop-color="#9c8414"/><stop offset="0.2574" stop-color="#9c8414"/><stop offset="0.3336" stop-color="#9c8414"/><stop offset="0.4083" stop-color="#9c8414"/><stop offset="0.5012" stop-color="#9c8414"/><stop offset="0.6080" stop-color="#b09618"/><stop offset="0.6932" stop-color="#b09a1a"/><stop offset="0.7994" stop-color="#a48d19"/><stop offset="0.9315" stop-color="#a08a18"/></linearGradient></defs>
<polygon points="718.4,78.0 713.9,95.0 711.2,104.9 709.4,109.5 705.0,114.8 697.4,124.6 686.5,139.5 679.7,148.8 665.9,169.6 659.0,183.4 654.1,197.2 649.2,217.8 647.6,240.0 653.5,240.0 656.7,217.8 666.6,197.2 670.7,183.4 679.7,169.6 697.4,148.8 703.3,139.5 711.2,124.6 713.2,114.8 714.0,109.5 714.7,104.9 718.0,95.0 720.0,78.0" fill="url(#bg0)" stroke="url(#bg0)" stroke-width="0.5"/>
<polygon points="720.0,78.0 718.0,95.0 714.7,104.9 714.0,109.5 713.2,114.8 711.2,124.6 703.3,139.5 697.4,148.8 679.7,169.6 670.7,183.4 666.6,197.2 656.7,217.8 653.5,240.0 662.5,240.0 665.6,217.8 674.9,197.2 678.4,183.4 687.0,169.6 703.8,148.8 709.3,139.5 715.2,124.6 717.2,114.8 718.0,109.5 718.7,104.9 721.0,95.0 722.0,78.0" fill="url(#bg1)" stroke="url(#bg1)" stroke-width="0.5"/>
<polygon points="722.0,78.0 721.0,95.0 718.7,104.9 718.0,109.5 717.2,114.8 715.2,124.6 709.3,139.5 703.8,148.8 687.0,169.6 678.4,183.4 674.9,197.2 665.6,217.8 662.5,240.0 680.5,240.0 681.6,217.8 685.3,197.2 690.5,183.4 695.9,169.6 709.3,148.8 713.7,139.5 718.7,124.6 720.1,114.8 720.9,109.5 721.6,104.9 724.0,95.0 724.0,78.0" fill="url(#bg2)" stroke="url(#bg2)" stroke-width="0.5"/>
<polygon points="724.0,78.0 724.0,95.0 721.6,104.9 720.9,109.5 720.1,114.8 718.7,124.6 713.7,139.5 709.3,148.8 695.9,169.6 690.5,183.4 685.3,197.2 681.6,217.8 680.5,240.0 683.5,240.0 685.0,217.8 688.0,197.2 693.0,183.4 702.8,169.6 715.9,148.8 721.1,139.5 723.6,124.6 724.6,114.8 725.1,109.5 725.6,104.9 728.0,95.0 726.0,78.0" fill="url(#bg3)" stroke="url(#bg3)" stroke-width="0.5"/>
<polygon points="726.0,78.0 728.0,95.0 725.6,104.9 725.1,109.5 724.6,114.8 723.6,124.6 721.1,139.5 715.9,148.8 702.8,169.6 693.0,183.4 688.0,197.2 685.0,217.8 683.5,240.0 690.4,240.0 688.7,217.8 691.5,197.2 694.3,183.4 705.4,169.6 718.7,148.8 724.6,139.5 729.0,124.6 729.5,114.8 730.0,109.5 730.5,104.9 731.8,95.0 728.0,78.0" fill="url(#bg4)" stroke="url(#bg4)" stroke-width="0.5"/>
<polygon points="648.7,223.0 643.9,262.3 647.8,273.0 654.0,277.6 656.0,231.0" fill="#dfc028" stroke="#dfc028" stroke-width="0.5"/>
<polygon points="656.0,231.0 654.0,277.6 659.3,281.0 662.0,235.6" fill="#c2a31f" stroke="#c2a31f" stroke-width="0.5"/>
<polygon points="662.0,235.6 659.3,281.0 672.7,282.7 672.7,238.2" fill="#a68b18" stroke="#a68b18" stroke-width="0.5"/>
<polygon points="672.7,238.2 672.7,282.7 683.4,280.0 681.6,236.5" fill="#47390a" stroke="#47390a" stroke-width="0.5"/>
<polygon points="681.6,236.5 683.4,280.0 686.9,278.3 695.8,268.5 696.2,258.7 687.8,226.7" fill="#7d6a12" stroke="#7d6a12" stroke-width="0.5"/>
<polygon points="656.0,231.0 650.0,268.0 654.0,277.6" fill="#d0b024" stroke="#d0b024" stroke-width="0.5"/>
<polygon points="662.0,235.6 665.0,260.0 659.3,281.0" fill="#b4961b" stroke="#b4961b" stroke-width="0.5"/>
<polygon points="672.7,238.2 677.0,260.0 672.7,282.7" fill="#3e3108" stroke="#3e3108" stroke-width="0.5"/>
<polygon points="687.8,226.7 690.0,262.0 686.9,278.3 695.8,268.5 696.2,258.7" fill="#8a7515" stroke="#8a7515" stroke-width="0.5"/>
<defs><clipPath id="tipc"><ellipse cx="725.6" cy="87.8" rx="5.4" ry="13.4"/></clipPath></defs><g transform="rotate(-18 725.6 87.8)"><g clip-path="url(#tipc)"><rect x="719" y="73" width="14" height="30" fill="#58882f"/><rect x="723.0" y="73" width="4.0" height="30" fill="#294a19"/><rect x="727.0" y="73" width="6" height="30" fill="#689a3c"/></g><ellipse cx="725.6" cy="87.8" rx="5.5" ry="13.5" fill="none" stroke="#3c2e06" stroke-width="1.5"/></g>
<path d="M550.9 319L568.4 317.9" stroke="#ff5a5a" stroke-width="0.9"/><path d="M550.9 319L550.7 305.4" stroke="#5a5aff" stroke-width="0.9"/><path d="M550.9 319L549.4 308.4" stroke="#4cc84c" stroke-width="0.9"/>
<g fill="none" stroke="#555" stroke-width="0.6"><path d="M570.4 316.6L572.6 319.2M572.6 316.6L570.4 319.2"/><path d="M550 301.4H552.2L550 304H552.2"/><path d="M546.6 306L547.8 307.6L549 306M547.8 307.6V309"/></g>
</svg></div>
<div class="abs" style="left:512.3px;top:43.5px;width:0.8px;height:307px;background:#fffff6"></div>

<svg class="abs" style="left:0;top:0" width="900" height="506" viewBox="0 0 900 506">
<g transform="translate(517 354) scale(1)"><path d="M4.7 0.3L9.1 2.6V7.4L4.7 9.7L0.3 7.4V2.6Z" fill="#f6f6f6" stroke="#8e8e8e" stroke-width="0.75"/><path d="M0.3 2.6L4.7 4.9L9.1 2.6M4.7 4.9V9.7" fill="none" stroke="#8e8e8e" stroke-width="0.75"/><path d="M1.9 6.9L4.1 9.2L1.9 11.5M4.7 6.9L6.9 9.2L4.7 11.5" fill="none" stroke="#161616" stroke-width="1.45"/></g><g transform="translate(532.6 354) scale(1)"><path d="M4.7 0.3L9.1 2.6V7.4L4.7 9.7L0.3 7.4V2.6Z" fill="#f6f6f6" stroke="#3e3e3e" stroke-width="0.85"/><path d="M0.3 2.6L4.7 4.9L9.1 2.6M4.7 4.9V9.7" fill="none" stroke="#3e3e3e" stroke-width="0.85"/><path d="M4.7 5.8V9M3.4 7.8L4.7 9.3L6 7.8M3 10.9H6.4" fill="none" stroke="#333" stroke-width="0.85"/></g><path d="M546.7 353V366" stroke="#dcdcdc" stroke-width="0.7"/>
<g transform="translate(551.4 354.7) scale(1)"><path d="M0.4 0.4L2 2M7.4 0.4L5.8 2M0.4 6.6L2 5" stroke="#2e2e2e" stroke-width="0.9"/><rect x="1.9" y="1.7" width="4" height="3.6" fill="#f4f4f4" stroke="#2e2e2e" stroke-width="0.9"/><path d="M0 0.3H1.6M0.3 0V1.6M6.2 0.3H7.8M7.5 0V1.6M0 6.7H1.6M0.3 5.4V7" stroke="#2e2e2e" stroke-width="0.7"/><path d="M5.6 5L7.6 7.4" stroke="#2e2e2e" stroke-width="1.2"/></g><g transform="translate(567.6 355.8) scale(1)"><circle cx="2.8" cy="2.8" r="2.2" fill="#f4f4f4" stroke="#2e2e2e" stroke-width="1"/><path d="M1.5 2.8H4.1M2.8 1.5V4.1" stroke="#2e2e2e" stroke-width="0.7"/><path d="M4.4 4.4L6.8 6.8" stroke="#2e2e2e" stroke-width="1.3"/></g><g transform="translate(583.1 355.8) scale(1)"><circle cx="2.8" cy="2.8" r="2.2" fill="#f4f4f4" stroke="#2e2e2e" stroke-width="1"/><path d="M1.5 2.8H4.1" stroke="#2e2e2e" stroke-width="0.7"/><path d="M4.4 4.4L6.8 6.8" stroke="#2e2e2e" stroke-width="1.3"/></g><g transform="translate(598.4 354.9) scale(1)"><path d="M2.6 1.4A3.5 3.5 0 1 1 1 3.4" fill="none" stroke="#2e2e2e" stroke-width="1.1"/><path d="M0.2 0.8L3.4 0L2.8 3.2Z" fill="#2e2e2e"/></g><path d="M611.9 353V366" stroke="#dcdcdc" stroke-width="0.7"/>
<path d="M616.6999999999999 358.7L618.55 355.4H622.25L624.1 358.7L622.25 362.0H618.55Z" fill="#f4f4f4" stroke="#2e2e2e" stroke-width="0.8"/><path d="M616.6999999999999 358.7H620.4L622.25 355.4M620.4 358.7L622.25 362.0" fill="none" stroke="#2e2e2e" stroke-width="0.65"/><path d="M623.3 357.09999999999997L625.3 358.7L623.3 360.3Z" fill="#2e2e2e"/><path d="M636.5 355.7L639.8 357.5V361.1L636.5 362.90000000000003L633.2 361.1V357.5Z" fill="#f4f4f4" stroke="#2e2e2e" stroke-width="0.8"/><path d="M633.2 357.5L636.5 359.3L639.8 357.5M636.5 359.3V362.90000000000003" fill="none" stroke="#2e2e2e" stroke-width="0.65"/><path d="M635.0 356.40000000000003L636.5 354.40000000000003L638.0 356.40000000000003Z" fill="#2e2e2e"/><path d="M651.5 354.49999999999994L654.8 356.29999999999995V359.9L651.5 361.7L648.2 359.9V356.29999999999995Z" fill="#f4f4f4" stroke="#2e2e2e" stroke-width="0.8"/><path d="M648.2 359.9L651.5 358.09999999999997L654.8 359.9M651.5 358.09999999999997V354.49999999999994" fill="none" stroke="#2e2e2e" stroke-width="0.65"/><path d="M650.0 360.99999999999994L651.5 362.99999999999994L653.0 360.99999999999994Z" fill="#2e2e2e"/><path d="M664.9 358.7L666.75 355.4H670.45L672.3000000000001 358.7L670.45 362.0H666.75Z" fill="#f4f4f4" stroke="#2e2e2e" stroke-width="0.8"/><path d="M672.3000000000001 358.7H668.6L666.75 355.4M668.6 358.7L666.75 362.0" fill="none" stroke="#2e2e2e" stroke-width="0.65"/><path d="M665.7 357.09999999999997L663.7 358.7L665.7 360.3Z" fill="#2e2e2e"/><path d="M683.0 355.2L686.5 357.024V360.976L683.0 362.8L679.5 360.976V357.024Z" fill="#f4f4f4" stroke="#2e2e2e" stroke-width="0.75"/><path d="M679.5 357.024L683.0 358.848L686.5 357.024M683.0 358.848V362.8" fill="none" stroke="#2e2e2e" stroke-width="0.75"/><path d="M679.5 357.024L683.0 358.848V362.8L679.5 360.976Z" fill="#1c1c1c"/><path d="M698.7 355.2L702.2 357.024V360.976L698.7 362.8L695.2 360.976V357.024Z" fill="#f4f4f4" stroke="#2e2e2e" stroke-width="0.75"/><path d="M695.2 357.024L698.7 358.848L702.2 357.024M698.7 358.848V362.8" fill="none" stroke="#2e2e2e" stroke-width="0.75"/><path d="M698.7 355.2L702.2 357.024V359.76L698.7 358.848Z" fill="#1c1c1c"/>
<rect x="710" y="352.4" width="14.399999999999977" height="14.0" rx="1.6" fill="#dadada" stroke="#cfcfcf" stroke-width="0.5"/><g transform="translate(713 355.40000000000003) scale(1)"><path d="M0.3 4.6L2.4 3.2H5L2.9 4.6ZM0.3 4.6H2.9V7.6H0.3ZM2.9 4.6L5 3.2V6.2L2.9 7.6Z" fill="#f4f4f4" stroke="#2e2e2e" stroke-width="0.8"/><path d="M2.4 3.2L7.8 0.3L5 6.2M5 3.2L7.8 0.3" fill="none" stroke="#2e2e2e" stroke-width="0.8"/></g><g transform="translate(729.2 355.79999999999995) scale(1)"><path d="M2.2 0.4H7.2V5H2.2Z" fill="#f4f4f4" stroke="#2e2e2e" stroke-width="0.8"/><path d="M0.4 2.2H5.4V7H0.4Z" fill="#f4f4f4" stroke="#2e2e2e" stroke-width="0.8"/><path d="M0.4 2.2L2.2 0.4M5.4 2.2L7.2 0.4M5.4 7L7.2 5" stroke="#2e2e2e" stroke-width="0.8"/></g>
<rect x="744.2" y="352.4" width="14.199999999999932" height="14.0" rx="1.6" fill="#dadada" stroke="#cfcfcf" stroke-width="0.5"/><g transform="translate(751.5 360) scale(1)"><path d="M-0.4 0.6V-4.4M-0.4 0.6L4.2 -0.2M-0.4 0.6L-3.4 3.6" fill="none" stroke="#2e2e2e" stroke-width="0.75"/></g><rect x="759.8" y="352.4" width="14.400000000000091" height="14.0" rx="1.6" fill="#dadada" stroke="#cfcfcf" stroke-width="0.5"/><g transform="translate(767.4 360) scale(1)"><path d="M-1 0.4V-4.6M-1 0.4L-4 3.4" fill="none" stroke="#2e2e2e" stroke-width="0.75"/><path d="M-1 0.4L1 3.6" stroke="#2e2e2e" stroke-width="0.75"/><path d="M1.4 3.8V0.2H4V3.8" fill="none" stroke="#2e2e2e" stroke-width="0.75"/></g><g transform="translate(778.8 356) scale(1)"><rect x="0.8" y="0.8" width="6" height="5.2" fill="none" stroke="#555" stroke-width="0.6"/><path d="M0.8 0V1.6M0 0.8H1.6M6.8 0V1.6M6 0.8H7.6M0.8 5.2V6.8M0 6H1.6M6.8 5.2V6.8M6 6H7.6" stroke="#2e2e2e" stroke-width="0.7"/></g>
</svg>

<div class="t" style="left:513.80px;top:373.20px;font-size:7.2px;font-weight:normal;color:#262626;letter-spacing:-0.003px;">Console</div>
<svg class="abs" style="left:612.3px;top:373.6px" width="5.6" height="5.6" viewBox="0 0 5.6 5.6"><rect x="0.3" y="0.3" width="5" height="5" rx="1.1" fill="#cdcdcd" stroke="#b9b9b9" stroke-width="0.5"/><path d="M1.5 1.5L4.1 4.1M4.1 1.5L1.5 4.1" stroke="#444" stroke-width="0.75"/></svg>
<div class="abs" style="left:512.6px;top:381.8px;width:106.2px;height:113.2px;background:#fff;border:0.7px solid #c3c3c3"></div>
<div class="t" style="left:514.80px;top:382.95px;font-size:7.3px;font-weight:normal;color:#262626;letter-spacing:-0.239px;">Geometry cache size in bytes:</div><div class="t" style="left:514.80px;top:391.61px;font-size:7.3px;font-weight:normal;color:#262626;letter-spacing:-0.592px;">187616</div><div class="t" style="left:514.80px;top:400.28px;font-size:7.3px;font-weight:normal;color:#262626;letter-spacing:-0.313px;">CGAL Polyhedrons in cache: 7</div><div class="t" style="left:514.80px;top:408.94px;font-size:7.3px;font-weight:normal;color:#262626;letter-spacing:-0.373px;">CGAL cache size in bytes:</div><div class="t" style="left:514.80px;top:417.61px;font-size:7.3px;font-weight:normal;color:#262626;letter-spacing:-0.453px;">1719904</div><div class="t" style="left:514.80px;top:426.27px;font-size:7.3px;font-weight:normal;color:#262626;letter-spacing:-0.259px;">Compiling design (CSG</div><div class="t" style="left:514.80px;top:434.93px;font-size:7.3px;font-weight:normal;color:#262626;letter-spacing:-0.131px;">Products normalization)...</div><div class="t" style="left:514.80px;top:443.60px;font-size:7.3px;font-weight:normal;color:#262626;letter-spacing:-0.208px;">Normalized tree has 14</div><div class="t" style="left:514.80px;top:452.26px;font-size:7.3px;font-weight:normal;color:#262626;letter-spacing:-0.131px;">elements!</div><div class="t" style="left:514.80px;top:460.93px;font-size:7.3px;font-weight:normal;color:#262626;letter-spacing:-0.160px;">Compile and preview finished.</div><div class="t" style="left:514.80px;top:469.59px;font-size:7.3px;font-weight:normal;color:#262626;letter-spacing:-0.057px;">Total rendering time:</div><div class="t" style="left:514.80px;top:478.25px;font-size:7.3px;font-weight:normal;color:#262626;letter-spacing:-0.006px;">0:00:00.042</div>
<div class="abs" style="left:612px;top:382.4px;width:6.4px;height:112px;background:#f6f6f6;border-left:0.6px solid #d4d4d4"></div>
<div class="abs" style="left:612.2px;top:388.4px;width:6.2px;height:87.4px;background:linear-gradient(90deg,#d6d6d6,#e4e4e4 30%,#d8d8d8)"></div>
<svg class="abs" style="left:613.2px;top:383.8px" width="4.4" height="3" viewBox="0 0 4.4 3"><path d="M0.4 2.4L2.2 0.5L4 2.4Z" fill="#444"/></svg>
<svg class="abs" style="left:613.2px;top:489.6px" width="4.4" height="3" viewBox="0 0 4.4 3"><path d="M0.4 0.6L2.2 2.5L4 0.6Z" fill="#444"/></svg>


<div class="t" style="left:623.20px;top:373.20px;font-size:7.2px;font-weight:normal;color:#262626;letter-spacing:-0.001px;">Error-Log</div>
<svg class="abs" style="left:892.6px;top:373.6px" width="5.6" height="5.6" viewBox="0 0 5.6 5.6"><rect x="0.3" y="0.3" width="5" height="5" rx="1.1" fill="#cdcdcd" stroke="#b9b9b9" stroke-width="0.5"/><path d="M1.5 1.5L4.1 4.1M4.1 1.5L1.5 4.1" stroke="#444" stroke-width="0.75"/></svg>
<div class="t" style="left:626.00px;top:388.70px;font-size:7.2px;color:#262626;letter-spacing:-0.470px;"><span style="text-decoration:underline;text-decoration-color:#707070;text-decoration-thickness:0.55px;text-underline-offset:0.2px">S</span>how</div>
<div class="abs" style="left:646.4px;top:385.6px;width:74px;height:12.2px;background:linear-gradient(#fbfbfb,#f1f1f1);border:0.7px solid #c6c6c6;border-radius:1.6px"></div>
<div class="t" style="left:648.80px;top:388.50px;font-size:7.2px;font-weight:normal;color:#262626;letter-spacing:0.299px;">All</div>
<svg class="abs" style="left:713px;top:391px" width="4" height="2.6" viewBox="0 0 4 2.6"><path d="M0.3 0.4L2 2.2L3.7 0.4Z" fill="#444"/></svg>
<div class="abs" style="left:625.8px;top:401px;width:269.4px;height:89.4px;background:#fff;border:0.7px solid #c6c6c6"></div>
<div class="abs" style="left:626.4px;top:401.6px;width:268.2px;height:10.2px;background:linear-gradient(#f9f9f9,#efefef);border-bottom:0.7px solid #d2d2d2"></div>
<div class="abs" style="left:662.8px;top:402.4px;width:0.7px;height:9px;background:#d2d2d2"></div>
<div class="abs" style="left:756.8px;top:402.4px;width:0.7px;height:9px;background:#d2d2d2"></div>
<div class="abs" style="left:794.6px;top:402.4px;width:0.7px;height:9px;background:#d2d2d2"></div>
<div class="t" style="left:635.20px;top:403.40px;font-size:7.2px;font-weight:normal;color:#262626;letter-spacing:-0.103px;">Group</div>
<div class="t" style="left:704.60px;top:403.40px;font-size:7.2px;font-weight:normal;color:#262626;letter-spacing:-0.134px;">File</div>
<div class="t" style="left:769.00px;top:403.40px;font-size:7.2px;font-weight:normal;color:#262626;letter-spacing:-0.071px;">Line</div>
<div class="t" style="left:838.40px;top:403.40px;font-size:7.2px;font-weight:normal;color:#262626;letter-spacing:0.130px;">Info</div>


<div class="t" style="left:1.60px;top:497.50px;font-size:7.0px;font-weight:normal;color:#262626;letter-spacing:-0.047px;">Viewport: translate = [ 80.38 91.88 77.64 ], rotate = [ 53.80 0.00 352.80 ], distance = 1489.11, fov = 22.50 (827x655)</div>
<div class="t" style="left:838.20px;top:497.50px;font-size:7.0px;font-weight:normal;color:#262626;letter-spacing:-0.255px;">OpenSCAD 2021.01</div>

</div></body></html>
